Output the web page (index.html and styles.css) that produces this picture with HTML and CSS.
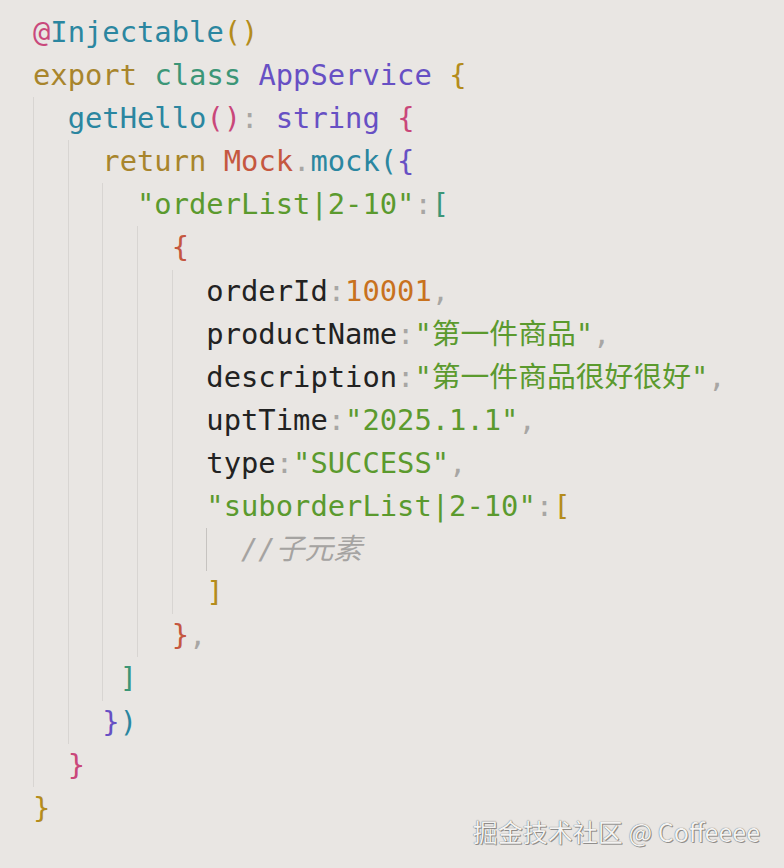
FILE: index.html
```html
<!DOCTYPE html>
<html>
<head>
<meta charset="utf-8">
<link rel="stylesheet" href="styles.css">
</head>
<body>
<div class="code">
  <div class="ln"><span class="at">@</span><span class="fn">Injectable</span><span class="gd">()</span></div>
  <div class="ln"><span class="kw">export</span> <span class="cl">class</span> <span class="pu">AppService</span> <span class="gd">{</span></div>
  <div class="ln"><span class="g"></span><span class="fn">getHello</span><span class="pk">()</span><span class="pn">:</span> <span class="pu">string</span> <span class="pk">{</span></div>
  <div class="ln"><span class="g"></span><span class="g"></span><span class="kw">return</span> <span class="rd">Mock</span><span class="pn">.</span><span class="fn">mock(</span><span class="pu">{</span></div>
  <div class="ln"><span class="g"></span><span class="g"></span><span class="g"></span><span class="st">"orderList|2-10"</span><span class="pn">:</span><span class="cl">[</span></div>
  <div class="ln"><span class="g"></span><span class="g"></span><span class="g"></span><span class="g"></span><span class="rd">{</span></div>
  <div class="ln"><span class="g"></span><span class="g"></span><span class="g"></span><span class="g"></span><span class="g"></span><span class="key">orderId</span><span class="pn">:</span><span class="nm">10001</span><span class="pn">,</span></div>
  <div class="ln"><span class="g"></span><span class="g"></span><span class="g"></span><span class="g"></span><span class="g"></span><span class="key">productName</span><span class="pn">:</span><span class="st">"第一件商品"</span><span class="pn">,</span></div>
  <div class="ln"><span class="g"></span><span class="g"></span><span class="g"></span><span class="g"></span><span class="g"></span><span class="key">description</span><span class="pn">:</span><span class="st">"第一件商品很好很好"</span><span class="pn">,</span></div>
  <div class="ln"><span class="g"></span><span class="g"></span><span class="g"></span><span class="g"></span><span class="g"></span><span class="key">uptTime</span><span class="pn">:</span><span class="st">"2025.1.1"</span><span class="pn">,</span></div>
  <div class="ln"><span class="g"></span><span class="g"></span><span class="g"></span><span class="g"></span><span class="g"></span><span class="key">type</span><span class="pn">:</span><span class="st">"SUCCESS"</span><span class="pn">,</span></div>
  <div class="ln"><span class="g"></span><span class="g"></span><span class="g"></span><span class="g"></span><span class="g"></span><span class="st">"suborderList|2-10"</span><span class="pn">:</span><span class="gd">[</span></div>
  <div class="ln"><span class="g"></span><span class="g"></span><span class="g"></span><span class="g"></span><span class="g"></span><span class="g g-act"></span><span class="cm">//子元素</span></div>
  <div class="ln"><span class="g"></span><span class="g"></span><span class="g"></span><span class="g"></span><span class="g"></span><span class="gd">]</span></div>
  <div class="ln"><span class="g"></span><span class="g"></span><span class="g"></span><span class="g"></span><span class="rd">}</span><span class="pn">,</span></div>
  <div class="ln"><span class="g"></span><span class="g"></span><span class="g g-half"></span><span class="cl">]</span></div>
  <div class="ln"><span class="g"></span><span class="g"></span><span class="pu">}</span><span class="fn">)</span></div>
  <div class="ln"><span class="g"></span><span class="pk">}</span></div>
  <div class="ln"><span class="gd">}</span></div>
</div>
<div class="mark">掘金技术社区 @ Coffeeee</div>
</body>
</html>
```

FILE: styles.css
```css
html, body {
  margin: 0;
  padding: 0;
  background: #e9e6e3;
  width: 784px;
  height: 868px;
  overflow: hidden;
}

body {
  position: relative;
}

.code {
  padding: 11px 0 0 33px;
  font-family: "DejaVu Sans Mono", "Noto Sans CJK SC", monospace;
  font-size: 28.8px;
  color: #222222;
}

.ln {
  display: block;
  height: 43.1px;
  line-height: 43.1px;
  white-space: pre;
}

.g {
  display: inline-block;
  vertical-align: top;
  height: 43.1px;
  width: 2ch;
  border-left: 1px solid #d8d5d2;
  box-sizing: border-box;
}

.g-half {
  width: 1ch;
}

.g-act {
  border-left-color: #c6c3c0;
}

.at { color: #c9497c; }
.fn { color: #2b86a0; }
.gd { color: #b48c1c; }
.kw { color: #a8852c; }
.cl { color: #3c9677; }
.pu { color: #6750c4; }
.pk { color: #c9477a; }
.pn { color: #a8a6a4; }
.rd { color: #c5573f; }
.st { color: #5b9a2e; }
.key { color: #222222; }
.nm { color: #c8721e; }
.cm { color: #a5a3a1; font-style: italic; }

.mark {
  position: absolute;
  right: 24px;
  bottom: 22px;
  font-family: "Noto Sans CJK SC", "Noto Sans", sans-serif;
  font-size: 25px;
  line-height: 30px;
  color: #f4f3f2;
  text-shadow: 0 0 1px #444, 1px 1px 0 rgba(0,0,0,0.35);
}
```
